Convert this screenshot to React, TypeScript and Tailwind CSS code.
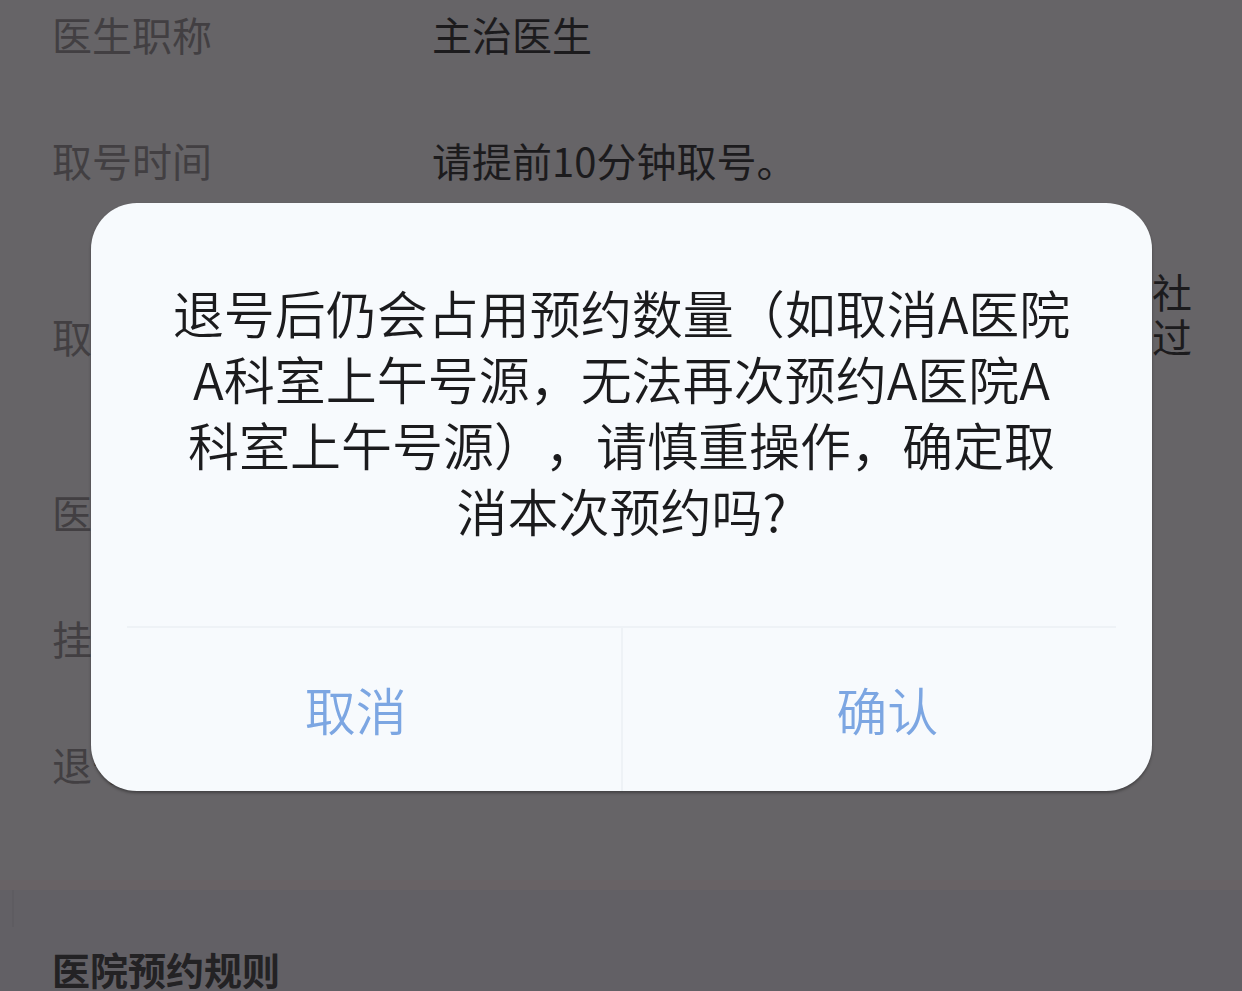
import React from "react";

const font = { fontFamily: '"Noto Sans CJK SC", "Noto Sans", sans-serif' };

function Row({ label, children, h }: { label: string; children: React.ReactNode; h: string }) {
  return (
    <div className={`flex items-center px-[52px] ${h}`}>
      <div className="w-[380px] shrink-0 text-[40px] font-normal leading-[45px] text-[#423f42]">{label}</div>
      <div className="flex-1 text-[40px] font-normal leading-[45px] text-[#1c1b1d]">{children}</div>
    </div>
  );
}

export default function App() {
  return (
    <div className="relative h-[991px] w-[1242px] overflow-hidden bg-[#666467] [text-spacing-trim:space-all]" style={font}>
      <div className="-mt-[29px] flex flex-col">
        <Row label="医生职称" h="h-[126px]">主治医生</Row>
        <Row label="取号时间" h="h-[126px]">请提前10分钟取号。</Row>
        <Row label="取号地点" h="h-[226px]">
          <div className="whitespace-nowrap">请在就诊当日携带就诊人有效身份证件或社</div>
          <div className="whitespace-nowrap">保卡到医院自助机上取号，未按时取号超过</div>
          <div className="whitespace-nowrap">15分钟视为爽约。</div>
        </Row>
        <Row label="医院地址" h="h-[126px]">门诊楼一层</Row>
        <Row label="挂号费用" h="h-[126px]">50元</Row>
        <Row label="退号规则" h="h-[126px]">就诊前一日可退号</Row>
        <div className="h-[53px]" />
        <div className="h-[10px] bg-[#686265]" />
        <div className="relative bg-[#626065] pl-[52px] pt-[55px]">
          <div className="absolute left-[12px] top-[0px] h-[37px] w-[2px] bg-[#5e5c61]" />
          <div className="text-[38px] font-bold leading-[48px] text-[#232224]">医院预约规则</div>
        </div>
      </div>

      <div className="absolute left-[91px] top-[203px] flex h-[588px] w-[1061px] flex-col overflow-hidden rounded-[46px] bg-[#f7fafd] shadow-[0_2px_3px_rgba(0,0,0,0.35)]">
        <div className="flex h-[423px] flex-col items-center pt-[76px] text-[51px] leading-[66px] text-[#1b1b1d] [font-weight:350]">
          <div className="whitespace-nowrap">退号后仍会占用预约数量（如取消A医院</div>
          <div className="whitespace-nowrap">A科室上午号源，无法再次预约A医院A</div>
          <div className="whitespace-nowrap">科室上午号源），请慎重操作，确定取</div>
          <div className="whitespace-nowrap">消本次预约吗?</div>
        </div>
        <div className="mx-[36px] h-[2px] bg-[#eef2f6]" />
        <div className="flex flex-1">
          <div className="flex flex-1 items-center justify-center text-[51px] text-[#7ca6e2] [font-weight:350]">取消</div>
          <div className="w-[2px] bg-[#eef2f6]" />
          <div className="flex flex-1 items-center justify-center text-[51px] text-[#7ca6e2] [font-weight:350]">确认</div>
        </div>
      </div>
    </div>
  );
}
